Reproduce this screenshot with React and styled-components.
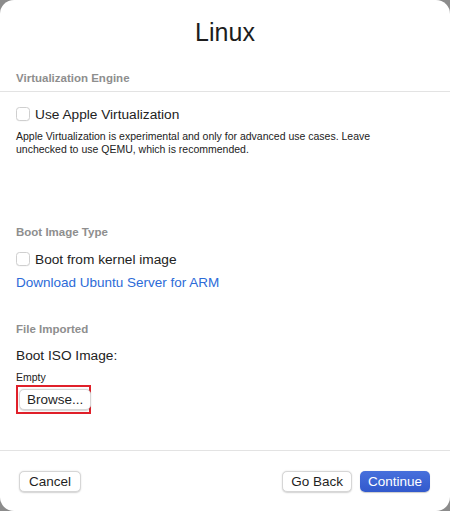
import React from "react";
import styled, { createGlobalStyle } from "styled-components";

const Global = createGlobalStyle`
  html, body { margin: 0; padding: 0; background: #8c8c8c; }
  body { font-family: "Liberation Sans", Arial, sans-serif; -webkit-font-smoothing: antialiased; }
  * { box-sizing: border-box; }
`;

const Sheet = styled.div`
  width: 450px;
  height: 511px;
  background: #ffffff;
  border-radius: 14px;
  display: flex;
  flex-direction: column;
  overflow: hidden;
  color: #1f1f1f;
`;

const Title = styled.h1`
  margin: 0;
  padding-top: 18px;
  height: 69px;
  text-align: center;
  font-size: 25px;
  font-weight: 400;
  color: #1d1d1d;
`;

const SectionHeader = styled.div`
  font-size: 11.5px;
  font-weight: 700;
  color: #8e8e8e;
  padding: 0 16px;
  height: 18px;
  margin-top: ${(p) => p.mt || 0}px;
  display: flex;
  align-items: center;
`;

const Divider = styled.div`
  height: 1px;
  background: #e3e3e3;
  margin-top: ${(p) => p.mt || 0}px;
`;

const Body = styled.div`
  flex: 1;
  display: flex;
  flex-direction: column;
`;

const CheckRow = styled.label`
  display: flex;
  align-items: center;
  gap: 5px;
  padding: 0 16px;
  margin-top: ${(p) => p.mt || 0}px;
  height: 16px;
  font-size: 13.7px;
  color: #222;
`;

const Box = styled.span`
  width: 14px;
  height: 14px;
  border: 1px solid #cfcfcf;
  border-radius: 3.5px;
  background: #fff;
  box-shadow: 0 0.5px 0.5px rgba(0, 0, 0, 0.05);
  flex: none;
`;

const Description = styled.p`
  margin: ${(p) => p.mt || 0}px 0 0;
  padding: 0 16px;
  width: 390px;
  font-size: 10.5px;
  line-height: 13px;
  color: #222;
`;

const Link = styled.a`
  display: block;
  margin-top: ${(p) => p.mt || 0}px;
  padding: 0 16px;
  font-size: 13.5px;
  line-height: 16px;
  color: #2c6bd8;
  text-decoration: none;
`;

const Label = styled.div`
  margin-top: ${(p) => p.mt || 0}px;
  padding: 0 16px;
  font-size: ${(p) => p.size || 13.7}px;
  line-height: ${(p) => (p.size ? p.size + 3 : 16)}px;
  color: #222;
`;

const Highlight = styled.div`
  margin: ${(p) => p.mt || 0}px 0 0 16px;
  width: 75px;
  height: 29px;
  border: 2px solid #e0202a;
  display: flex;
  align-items: center;
  padding-left: 1px;
`;

const Button = styled.button`
  height: 21px;
  padding: 0 ${(p) => p.px || 8}px;
  font-family: inherit;
  font-size: 13.5px;
  border-radius: 5px;
  border: ${(p) => (p.primary ? "none" : "0.5px solid #d6d6d6")};
  background: ${(p) => (p.primary ? "linear-gradient(#4770dc, #3259cc)" : "#ffffff")};
  color: ${(p) => (p.primary ? "#ffffff" : "#1f1f1f")};
  box-shadow: ${(p) => (p.primary ? "0 0.5px 1px rgba(0,0,0,0.2)" : "0 0.5px 1.5px rgba(0,0,0,0.18)")};
  display: flex;
  align-items: center;
  justify-content: center;
`;

const Footer = styled.div`
  border-top: 1px solid #e3e3e3;
  height: 61px;
  display: flex;
  align-items: center;
  padding: 0 20px 0 19px;
  gap: 8px;
`;

const Spacer = styled.div`
  flex: 1;
`;

export default function App() {
  return (
    <>
      <Global />
      <Sheet>
        <Title>Linux</Title>
        <Body>
          <SectionHeader>Virtualization Engine</SectionHeader>
          <Divider mt={4} />
          <CheckRow mt={14}>
            <Box />
            Use Apple Virtualization
          </CheckRow>
          <Description mt={8}>
            Apple Virtualization is experimental and only for advanced use cases. Leave
            unchecked to use QEMU, which is recommended.
          </Description>
          <SectionHeader mt={67}>Boot Image Type</SectionHeader>
          <CheckRow mt={10}>
            <Box />
            Boot from kernel image
          </CheckRow>
          <Link mt={8}>Download Ubuntu Server for ARM</Link>
          <SectionHeader mt={29}>File Imported</SectionHeader>
          <Label mt={10}>Boot ISO Image:</Label>
          <Label size={10.5} mt={7}>Empty</Label>
          <Highlight mt={0}>
            <Button px={7}>Browse...</Button>
          </Highlight>
        </Body>
        <Footer>
          <Button px={9}>Cancel</Button>
          <Spacer />
          <Button>Go Back</Button>
          <Button primary px={8}>Continue</Button>
        </Footer>
      </Sheet>
    </>
  );
}
